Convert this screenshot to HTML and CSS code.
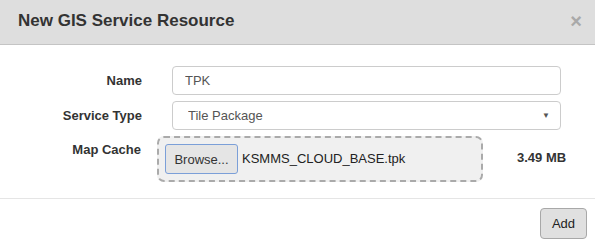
FILE: index.html
```html
<!DOCTYPE html>
<html lang="en">
<head>
    <meta charset="UTF-8">
    <title>New GIS Service Resource</title>
    <link rel="stylesheet" href="styles.css">
</head>
<body>
    <div class="modal">
        <div class="modal-header">
            <h4>New GIS Service Resource</h4>
            <span class="close">&times;</span>
        </div>

        <form class="modal-body">
            <div class="form-row">
                <label for="name">Name</label>
                <input type="text" id="name" class="field" value="TPK">
            </div>

            <div class="form-row">
                <label for="type">Service Type</label>
                <div class="select-wrap">
                    <select id="type" class="field">
                        <option>Tile Package</option>
                    </select>
                    <span class="caret">&#9660;</span>
                </div>
            </div>

            <div class="form-row cache-row">
                <label>Map Cache</label>
                <div class="drop-zone">
                    <button type="button" class="browse-btn">Browse...</button>
                    <span class="file-name">KSMMS_CLOUD_BASE.tpk</span>
                </div>
                <span class="file-size">3.49 MB</span>
            </div>
        </form>

        <div class="modal-footer">
            <button type="button" class="add-btn">Add</button>
        </div>
    </div>
</body>
</html>
```

FILE: styles.css
```css
* {
    margin: 0;
    padding: 0;
    box-sizing: border-box;
}

body {
    font-family: "Liberation Sans", Arial, sans-serif;
    font-size: 13px;
    color: #333;
    background: white;
}

.modal {
    width: 595px;
    height: 245px;
    display: flex;
    flex-direction: column;
}

.modal-header {
    height: 45px;
    background: #dedede;
    border-bottom: 1px solid #c4c4c4;
    display: flex;
    align-items: center;
    justify-content: space-between;
    padding: 0 13px 2px 18px;
}

.modal-header h4 {
    font-size: 17px;
    font-weight: bold;
    color: #333;
}

.close {
    font-size: 20px;
    font-weight: bold;
    color: #a9a9a9;
    line-height: 1;
}

.modal-body {
    padding-top: 21px;
    height: 154px;
    border-bottom: 1px solid #e5e5e5;
}

.form-row {
    display: flex;
    align-items: center;
    margin-bottom: 6px;
}

.form-row label {
    width: 172px;
    text-align: right;
    font-weight: bold;
    padding-right: 30px;
    flex-shrink: 0;
}

.field {
    width: 389px;
    height: 29px;
    border: 1px solid #ccc;
    border-radius: 4px;
    padding: 0 12px;
    font-family: inherit;
    font-size: 13px;
    color: #555;
    background: white;
}

.select-wrap {
    position: relative;
}

.select-wrap select {
    appearance: none;
    padding-left: 15px;
}

.caret {
    position: absolute;
    right: 11px;
    top: 10px;
    font-size: 8px;
    color: #555;
    pointer-events: none;
}

.cache-row {
    align-items: flex-start;
}

.cache-row label {
    width: 157px;
    padding-right: 16px;
    padding-top: 6px;
}

.drop-zone {
    width: 326px;
    height: 46px;
    flex-shrink: 0;
    border: 2px dashed #aaa;
    border-radius: 7px;
    background: #f0f0f0;
    display: flex;
    align-items: center;
    padding: 0 6px;
    gap: 4px;
}

.browse-btn {
    width: 73px;
    height: 30px;
    border: 1px solid #7b9fd8;
    border-radius: 3px;
    background: #e5e5e5;
    font-family: inherit;
    font-size: 13px;
    color: #333;
}

.file-name {
    color: #222;
    margin-bottom: 2px;
}

.file-size {
    font-weight: bold;
    white-space: nowrap;
    margin-left: 34px;
    padding-top: 14px;
}

.modal-footer {
    display: flex;
    justify-content: flex-end;
    padding: 9px 8px 0 0;
}

.add-btn {
    width: 47px;
    height: 31px;
    border: 1px solid #a8a8a8;
    border-radius: 4px;
    background: #e0e0e0;
    font-family: inherit;
    font-size: 13px;
    color: #222;
}
```
